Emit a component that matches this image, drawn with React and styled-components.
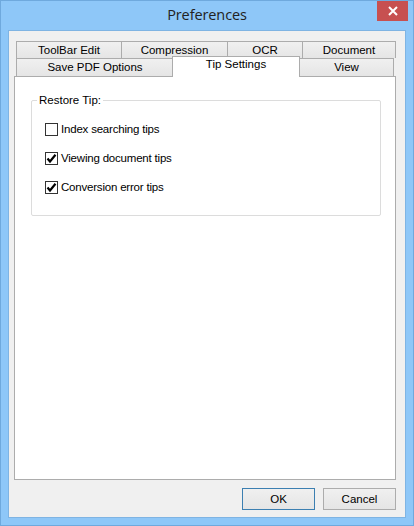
import React, { useState } from "react";
import styled, { createGlobalStyle } from "styled-components";

const GlobalStyle = createGlobalStyle`
  html, body {
    margin: 0;
    padding: 0;
    background: #8ec7f8;
  }
  * {
    box-sizing: border-box;
  }
`;

const topTabs = [
  { label: "ToolBar Edit", width: 106 },
  { label: "Compression", width: 107 },
  { label: "OCR", width: 76 },
  { label: "Document", width: 94 },
];

const bottomTabs = [
  { label: "Save PDF Options", width: 158 },
  { label: "Tip Settings", width: 128 },
  { label: "View", width: 95 },
];

const tips = [
  { id: "index", label: "Index searching tips", checked: false },
  { id: "viewing", label: "Viewing document tips", checked: true },
  { id: "conversion", label: "Conversion error tips", checked: true },
];

const App = () => {
  const [active, setActive] = useState("Tip Settings");
  const [checks, setChecks] = useState(
    Object.fromEntries(tips.map((t) => [t.id, t.checked]))
  );

  const toggle = (id) => setChecks((c) => ({ ...c, [id]: !c[id] }));

  return (
    <>
      <GlobalStyle />
      <Window>
        <TitleBar>
          <span />
          <Title>Preferences</Title>
          <CloseButton aria-label="Close">
            <svg width="10" height="10" viewBox="0 0 10 10">
              <path d="M1 1 L9 9 M9 1 L1 9" stroke="#fff" strokeWidth="2" />
            </svg>
          </CloseButton>
        </TitleBar>

        <Client>
          <TabStrip>
            <TabRow>
              {topTabs.map((t) => (
                <Tab key={t.label} w={t.width} onClick={() => setActive(t.label)}>
                  {t.label}
                </Tab>
              ))}
            </TabRow>
            <TabRow>
              {bottomTabs.map((t) =>
                t.label === active ? (
                  <ActiveTab key={t.label} w={t.width}>{t.label}</ActiveTab>
                ) : (
                  <Tab key={t.label} w={t.width} onClick={() => setActive(t.label)}>
                    {t.label}
                  </Tab>
                )
              )}
            </TabRow>
          </TabStrip>

          <Panel>
            <GroupBox>
              <Legend>Restore Tip:</Legend>
              {tips.map((t) => (
                <CheckRow key={t.id} onClick={() => toggle(t.id)}>
                  <CheckBox>
                    {checks[t.id] && (
                      <svg width="11" height="11" viewBox="0 0 11 11">
                        <path
                          d="M1.5 5.5 L4 8.5 L9.5 1.8"
                          fill="none"
                          stroke="#000"
                          strokeWidth="2.2"
                        />
                      </svg>
                    )}
                  </CheckBox>
                  <CheckLabel>{t.label}</CheckLabel>
                </CheckRow>
              ))}
            </GroupBox>
          </Panel>

          <ButtonRow>
            <DialogButton isDefault>OK</DialogButton>
            <DialogButton>Cancel</DialogButton>
          </ButtonRow>
        </Client>
      </Window>
    </>
  );
};

const Window = styled.div`
  width: 414px;
  height: 526px;
  background: #8ec7f8;
  border: 1px solid #6fa9dd;
  display: flex;
  flex-direction: column;
  font-family: "Liberation Sans", Arial, sans-serif;
`;

const TitleBar = styled.div`
  height: 29px;
  display: grid;
  grid-template-columns: 1fr auto 1fr;
  align-items: start;
`;

const Title = styled.div`
  font-family: "Open Sans", "Noto Sans", sans-serif;
  font-size: 14.5px;
  color: #222;
  line-height: 28px;
  letter-spacing: -0.1px;
`;

const CloseButton = styled.div`
  justify-self: end;
  width: 31px;
  height: 20px;
  margin-right: 5px;
  background: #c75050;
  display: flex;
  align-items: center;
  justify-content: center;
`;

const Client = styled.div`
  margin: 0 7px 7px 7px;
  height: 488px;
  background: #f0f0f0;
  border: 1px solid #7fb4e3;
  padding: 10px 9px 0 5px;
  display: flex;
  flex-direction: column;
`;

const TabStrip = styled.div`
  padding-left: 2px;
  display: flex;
  flex-direction: column;
`;

const TabRow = styled.div`
  display: flex;
  height: 17px;
  align-items: flex-end;
  & + & {
    height: 18px;
  }
`;

const Tab = styled.div`
  width: ${(p) => p.w}px;
  height: 100%;
  margin-right: -1px;
  border: 1px solid #acacac;
  border-bottom: none;
  background: linear-gradient(#f0f0f0, #e5e5e5);
  font-size: 11.5px;
  color: #000;
  text-align: center;
  line-height: 16px;
  cursor: default;
`;

const ActiveTab = styled.div`
  width: ${(p) => p.w}px;
  height: 21px;
  margin: 0 -1px -1px -1px;
  position: relative;
  z-index: 2;
  border: 1px solid #acacac;
  border-bottom: none;
  background: #fff;
  font-size: 11.5px;
  color: #000;
  text-align: center;
  line-height: 15px;
`;

const Panel = styled.div`
  height: 404px;
  background: #fff;
  border: 1px solid #acacac;
  padding: 17px 14px 0 16px;
`;

const GroupBox = styled.fieldset`
  margin: 0;
  height: 122px;
  border: 1px solid #dcdcdc;
  border-radius: 2px;
  padding: 16px 0 0 13px;
  display: flex;
  flex-direction: column;
  gap: 15px;
`;

const Legend = styled.legend`
  font-size: 11.5px;
  color: #000;
  padding: 0 2px;
  margin-left: -8px;
`;

const CheckRow = styled.div`
  display: flex;
  align-items: center;
  gap: 3px;
  height: 14px;
  cursor: default;
`;

const CheckBox = styled.div`
  width: 13px;
  height: 13px;
  border: 1px solid #333;
  background: #fff;
  display: flex;
  align-items: center;
  justify-content: center;
`;

const CheckLabel = styled.span`
  font-size: 11.5px;
  letter-spacing: -0.2px;
  color: #000;
`;

const ButtonRow = styled.div`
  display: flex;
  justify-content: flex-end;
  gap: 8px;
  padding-top: 8px;
`;

const DialogButton = styled.button`
  width: 73px;
  height: 22px;
  padding: 0;
  font-family: "Liberation Sans", Arial, sans-serif;
  font-size: 11.5px;
  color: #000;
  background: linear-gradient(#f0f0f0, #e5e5e5);
  border: 1px solid ${(p) => (p.isDefault ? "#3c7fb1" : "#acacac")};
  border-radius: 0;
`;

export default App;
